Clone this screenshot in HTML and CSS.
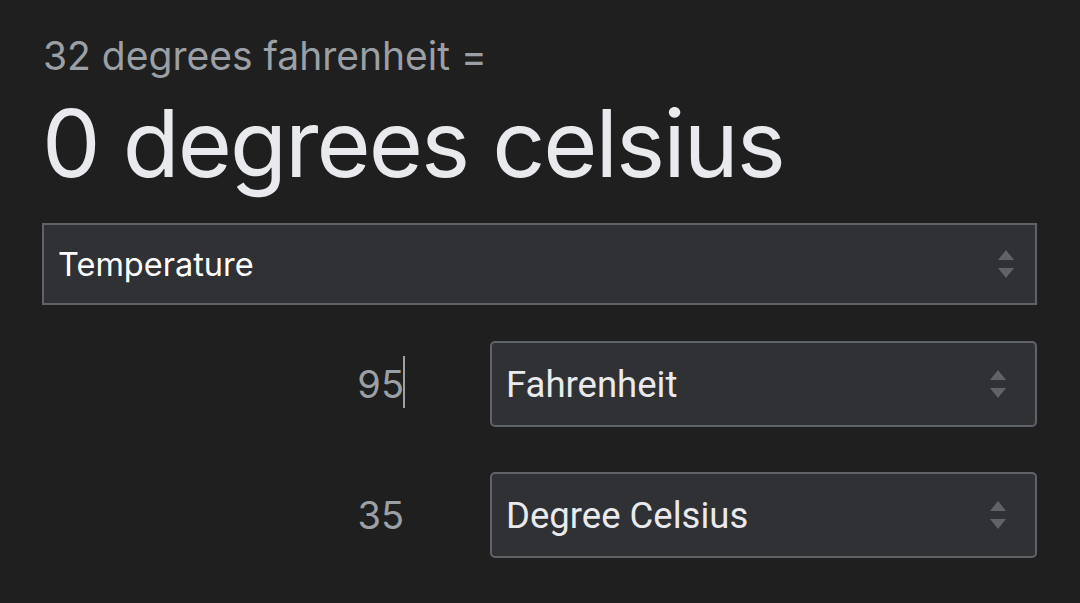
FILE: index.html
```html
<!DOCTYPE html>
<html>
<head>
<meta charset="utf-8">
<link rel="stylesheet" href="styles.css">
</head>
<body>
<div class="card">
  <div class="sub">32 degrees fahrenheit =</div>
  <div class="result">0 degrees celsius</div>
  <div class="select wide">
    <span class="label">Temperature</span>
    <svg class="arrows" width="20" height="32" viewBox="0 0 20 32"><path d="M10 2 L18 12 H2 Z M2 20 H18 L10 30 Z" fill="#5f6368"/></svg>
  </div>
  <div class="row first">
    <div class="num"><span>95</span><span class="caret"></span></div>
    <div class="select unit">
      <span class="label roboto">Fahrenheit</span>
      <svg class="arrows" width="20" height="32" viewBox="0 0 20 32"><path d="M10 2 L18 12 H2 Z M2 20 H18 L10 30 Z" fill="#5f6368"/></svg>
    </div>
  </div>
  <div class="row second">
    <div class="num"><span>35</span></div>
    <div class="select unit">
      <span class="label roboto">Degree Celsius</span>
      <svg class="arrows" width="20" height="32" viewBox="0 0 20 32"><path d="M10 2 L18 12 H2 Z M2 20 H18 L10 30 Z" fill="#5f6368"/></svg>
    </div>
  </div>
</div>
</body>
</html>
```
FILE: styles.css
```css
html, body {
  margin: 0;
  padding: 0;
  background: #1f1f1f;
  height: 100%;
}
body {
  font-family: Inter, "Open Sans", sans-serif;
  color: #e8eaed;
}
.card {
  padding: 30px 43px 0 42px;
  display: flex;
  flex-direction: column;
}
.sub {
  font-size: 39px;
  line-height: 52px;
  color: #9aa0a6;
  padding-left: 1px;
}
.result {
  font-size: 93px;
  line-height: 110px;
  color: #e8eaed;
  letter-spacing: -2px;
  margin-top: 6px;
}
.select {
  box-sizing: border-box;
  background: #303134;
  border: 2px solid #5f6368;
  display: flex;
  align-items: center;
  justify-content: space-between;
}
.wide {
  margin-top: 25px;
  height: 82px;
  padding: 0 19px 0 14px;
}
.label {
  font-size: 32.5px;
  color: #ffffff;
}
.roboto {
  font-family: Roboto, sans-serif;
  font-size: 36.5px;
  color: #e8eaed;
}
.arrows {
  width: 20px;
  height: 32px;
}
.row {
  display: grid;
  grid-template-columns: 448px 547px;
  align-items: center;
}
.first { margin-top: 36px; }
.second { margin-top: 45px; }
.num {
  display: flex;
  justify-content: flex-end;
  align-items: center;
  padding-right: 86px;
  font-size: 38px;
  color: #9aa0a6;
  position: relative;
}
.caret {
  position: absolute;
  right: 85px;
  top: 50%;
  width: 2px;
  height: 52px;
  margin-top: -28px;
  background: #9aa0a6;
}
.unit {
  height: 86px;
  border-radius: 5px;
  padding: 0 27px 0 14px;
}
```
